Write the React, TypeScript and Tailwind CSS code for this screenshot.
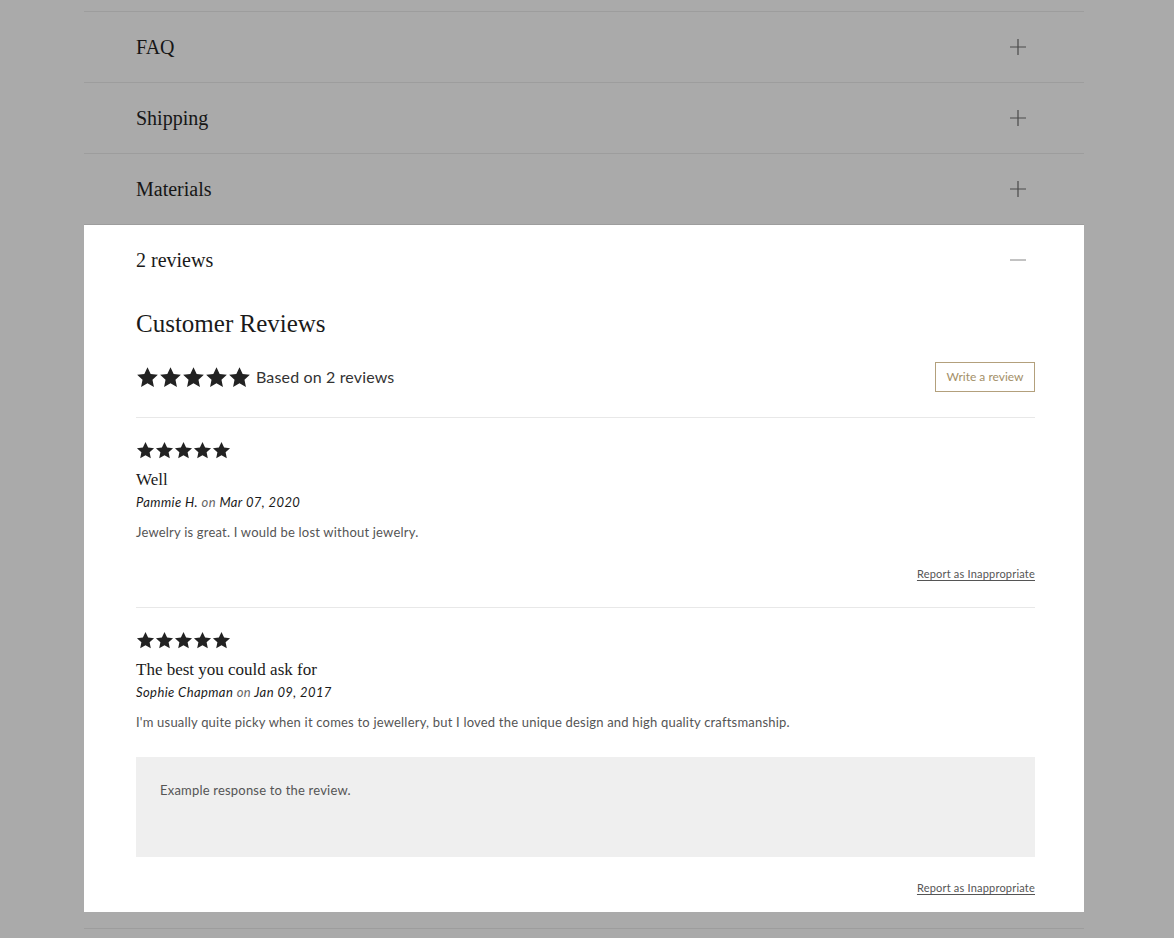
import React from 'react';

const serif = { fontFamily: '"Liberation Serif", serif' };

function Star({ size }: { size: number }) {
  return (
    <svg width={size} height={size} viewBox="0 0 24 24" aria-hidden="true">
      <path
        d="M12 1.4l3.3 6.9 7.5.9-5.6 5.1 1.5 7.5L12 18.1l-6.7 3.7 1.5-7.5L1.2 9.2l7.5-.9z"
        fill="#222"
      />
    </svg>
  );
}

function Stars({ size }: { size: number }) {
  return (
    <div className="flex">
      {[0, 1, 2, 3, 4].map(i => (
        <Star key={i} size={size} />
      ))}
    </div>
  );
}

function Plus() {
  return (
    <svg width="16" height="16" viewBox="0 0 16 16" aria-hidden="true">
      <path d="M8 0v16M0 8h16" stroke="#4a4a4a" strokeWidth="1.2" />
    </svg>
  );
}

function Minus() {
  return (
    <svg width="16" height="16" viewBox="0 0 16 16" aria-hidden="true">
      <path d="M0 8h16" stroke="#9a9a9a" strokeWidth="1.2" />
    </svg>
  );
}

function ClosedRow({ title }: { title: string }) {
  return (
    <div className="flex h-[71px] items-center justify-between border-b border-[#9d9d9d] pl-[52px] pr-[58px]">
      <span className="text-[20px] text-[#161616]" style={serif}>
        {title}
      </span>
      <Plus />
    </div>
  );
}

type Review = {
  title: string;
  author: string;
  date: string;
  body: string;
  response?: string;
};

const reviews: Review[] = [
  {
    title: 'Well',
    author: 'Pammie H.',
    date: 'Mar 07, 2020',
    body: 'Jewelry is great. I would be lost without jewelry.',
  },
  {
    title: 'The best you could ask for',
    author: 'Sophie Chapman',
    date: 'Jan 09, 2017',
    body: "I'm usually quite picky when it comes to jewellery, but I loved the unique design and high quality craftsmanship.",
    response: 'Example response to the review.',
  },
];

function ReviewItem({ review, last }: { review: Review; last: boolean }) {
  return (
    <div className={`pt-[23px] ${last ? 'pb-[16px]' : 'pb-[25px] border-b border-[#e8e8e8]'}`}>
      <Stars size={19} />
      <div className="mt-[9px] text-[17px] leading-[22px] text-[#1a1a1a]" style={serif}>
        {review.title}
      </div>
      <div className="mt-[1px] text-[13px] italic leading-[20px] tracking-[0.4px] text-[#1a1a1a]">
        {review.author} <span className="text-[#666]">on</span> {review.date}
      </div>
      <p className="mt-[10px] text-[13px] leading-[20px] tracking-[0.2px] text-[#555]">{review.body}</p>
      {review.response && (
        <div className="mt-[25px] h-[100px] bg-[#efefef] px-[24px] pt-[23px] text-[13px] leading-[20px] tracking-[0.2px] text-[#555]">
          {review.response}
        </div>
      )}
      <div className={`flex justify-end ${review.response ? 'mt-[23px]' : 'mt-[24px]'}`}>
        <a className="text-[11px] leading-[16px] tracking-[0.2px] text-[#555] underline underline-offset-2">
          Report as Inappropriate
        </a>
      </div>
    </div>
  );
}

export default function App() {
  return (
    <div
      className="min-h-[938px] w-full overflow-hidden bg-[#aaaaaa] pt-[11px]"
      style={{ fontFamily: 'Lato, "Noto Sans", sans-serif' }}
    >
      <div className="ml-[84px] w-[1000px]">
        <div className="border-t border-[#9d9d9d]">
          <ClosedRow title="FAQ" />
          <ClosedRow title="Shipping" />
          <ClosedRow title="Materials" />
        </div>

        <div className="bg-white">
          <div className="flex h-[70px] items-center justify-between pl-[52px] pr-[58px]">
            <span className="text-[20px] text-[#1a1a1a]" style={serif}>
              2 reviews
            </span>
            <Minus />
          </div>

          <div className="pl-[52px] pr-[49px] pt-[14px]">
            <h2 className="text-[25px] leading-[30px] text-[#1a1a1a]" style={serif}>
              Customer Reviews
            </h2>
            <div className="mt-[23px] flex items-center justify-between border-b border-[#e8e8e8] pb-[25px]">
              <div className="flex items-center gap-[5px]">
                <Stars size={23} />
                <span className="text-[16px] tracking-[0.15px] text-[#333]">Based on 2 reviews</span>
              </div>
              <button className="h-[30px] w-[100px] border border-[#b3a07c] text-[12px] text-[#a38f68]">
                Write a review
              </button>
            </div>

            {reviews.map((r, i) => (
              <ReviewItem key={r.author} review={r} last={i === reviews.length - 1} />
            ))}
          </div>
        </div>

        <div className="h-[17px] border-b border-[#9d9d9d]" />
      </div>
    </div>
  );
}
